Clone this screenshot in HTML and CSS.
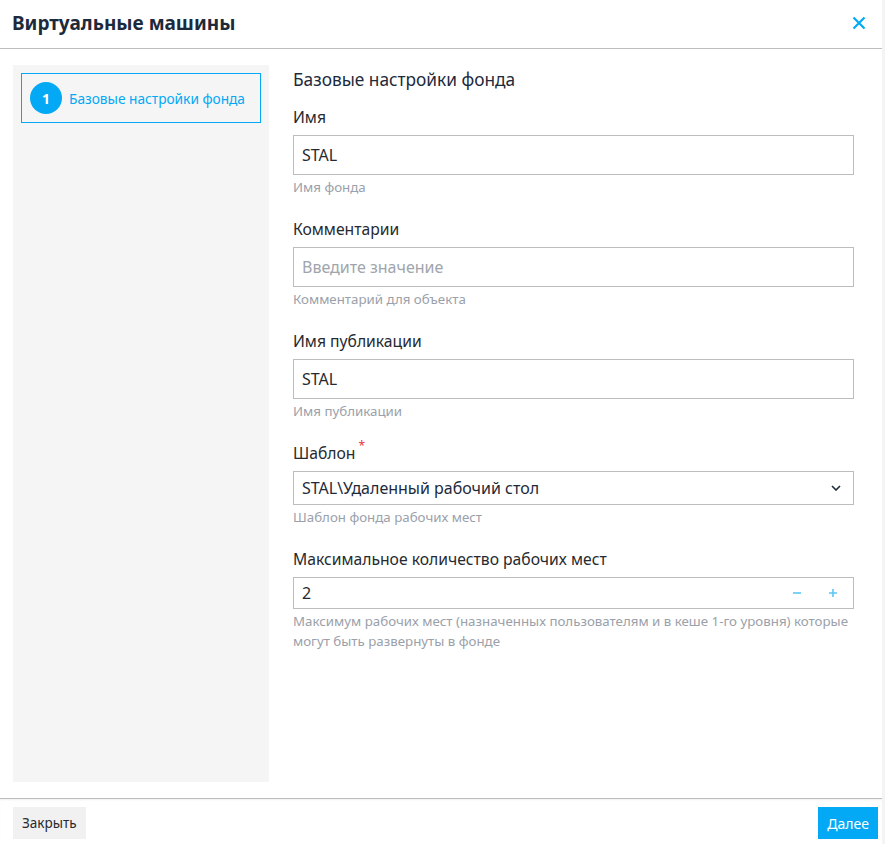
FILE: index.html
```html
<!DOCTYPE html>
<html lang="ru">
<head>
    <meta charset="UTF-8">
    <title>Виртуальные машины</title>
    <link rel="stylesheet" href="styles.css">
</head>
<body>
    <div class="dialog">
        <div class="dialog-header">
            <h1>Виртуальные машины</h1>
            <button class="close" aria-label="Закрыть">
                <svg width="14" height="14" viewBox="0 0 14 14">
                    <path d="M1.5 1.5 L12.5 12.5 M12.5 1.5 L1.5 12.5" stroke="currentColor" stroke-width="2.2" fill="none"/>
                </svg>
            </button>
        </div>

        <div class="dialog-body">
            <div class="steps">
                <div class="step active">
                    <span class="step-num">1</span>
                    <span class="step-title">Базовые настройки фонда</span>
                </div>
            </div>

            <div class="content">
                <h2>Базовые настройки фонда</h2>

                <div class="field">
                    <label>Имя</label>
                    <input type="text" value="STAL">
                    <div class="hint">Имя фонда</div>
                </div>

                <div class="field">
                    <label>Комментарии</label>
                    <input type="text" placeholder="Введите значение">
                    <div class="hint">Комментарий для объекта</div>
                </div>

                <div class="field">
                    <label>Имя публикации</label>
                    <input type="text" value="STAL">
                    <div class="hint">Имя публикации</div>
                </div>

                <div class="field">
                    <label class="required">Шаблон</label>
                    <div class="select">
                        <span>STAL\Удаленный рабочий стол</span>
                        <svg width="10" height="6" viewBox="0 0 10 6">
                            <path d="M1 1 L5 5 L9 1" stroke="currentColor" stroke-width="1.6" fill="none"/>
                        </svg>
                    </div>
                    <div class="hint">Шаблон фонда рабочих мест</div>
                </div>

                <div class="field">
                    <label>Максимальное количество рабочих мест</label>
                    <div class="number">
                        <span class="value">2</span>
                        <span class="spin">
                            <svg width="10" height="10" viewBox="0 0 10 10">
                                <path d="M1 5 H9" stroke="currentColor" stroke-width="1.6"/>
                            </svg>
                        </span>
                        <span class="spin">
                            <svg width="10" height="10" viewBox="0 0 10 10">
                                <path d="M1 5 H9 M5 1 V9" stroke="currentColor" stroke-width="1.6"/>
                            </svg>
                        </span>
                    </div>
                    <div class="hint">Максимум рабочих мест (назначенных пользователям и в кеше 1-го уровня) которые могут быть развернуты в фонде</div>
                </div>
            </div>
        </div>

        <div class="dialog-footer">
            <button class="btn">Закрыть</button>
            <button class="btn primary">Далее</button>
        </div>
    </div>
</body>
</html>
```

FILE: styles.css
```css
:root {
    --blue: #03a9f4;
    --spin: #5cc6f7;
    --title: #1d2a3b;
    --text: #262a30;
    --hint: #9aa1aa;
    --border: #bdbdbd;
    --panel: #f5f5f5;
}

* {
    box-sizing: border-box;
}

body {
    margin: 0;
    background: #f4f4f4;
    font-family: "Noto Sans", "Open Sans", sans-serif;
    color: var(--text);
}

.dialog {
    width: 882px;
    height: 844px;
    background: #fff;
    display: flex;
    flex-direction: column;
}

.dialog-header {
    height: 49px;
    padding: 0 12px 2px 12px;
    border-bottom: 1px solid var(--border);
    display: flex;
    align-items: center;
    justify-content: space-between;
}

.dialog-header h1 {
    margin: 0;
    font-size: 19px;
    font-weight: 700;
    color: var(--title);
}

.close {
    border: none;
    background: none;
    padding: 0;
    margin-right: 4px;
    color: var(--blue);
    display: flex;
}

.dialog-body {
    flex: 1;
    display: flex;
    padding: 16px 28px 16px 13px;
}

.steps {
    width: 256px;
    background: var(--panel);
    padding: 8px;
}

.step {
    height: 50px;
    display: flex;
    align-items: center;
    gap: 7px;
    padding: 0 8px;
    border: 1px solid var(--blue);
    color: var(--blue);
    font-size: 13.7px;
}

.step-num {
    width: 32px;
    height: 32px;
    border-radius: 50%;
    background: var(--blue);
    color: #fff;
    font-weight: 700;
    font-size: 14px;
    display: flex;
    align-items: center;
    justify-content: center;
}

.content {
    flex: 1;
    padding: 3px 0 0 24px;
}

.content h2 {
    margin: 0 0 15px;
    font-size: 17.3px;
    font-weight: 400;
    line-height: 24px;
    color: var(--title);
}

.field {
    margin-bottom: 22px;
}

.field label {
    display: block;
    font-size: 15.7px;
    line-height: 20px;
    margin-bottom: 8px;
    color: var(--text);
}

.field label.required::after {
    content: "*";
    color: #f0333d;
    font-size: 12px;
    line-height: 0;
    vertical-align: 9px;
    margin-left: 3px;
}

.field input {
    display: block;
    width: 100%;
    height: 40px;
    padding: 0 8px;
    border: 1px solid var(--border);
    font-family: inherit;
    font-size: 16px;
    color: var(--text);
    outline: none;
}

.field input::placeholder {
    color: #a0a5ad;
}

.hint {
    margin-top: 2px;
    font-size: 13.3px;
    line-height: 20px;
    color: var(--hint);
}

.select {
    height: 34px;
    border: 1px solid var(--border);
    padding: 0 12px 0 8px;
    display: flex;
    align-items: center;
    justify-content: space-between;
    font-size: 16px;
    color: var(--title);
}

.number {
    height: 32px;
    border: 1px solid var(--border);
    padding: 0 2px 0 8px;
    display: flex;
    align-items: center;
    font-size: 16px;
}

.number .value {
    flex: 1;
}

.number .spin {
    width: 36px;
    display: flex;
    justify-content: center;
    color: var(--spin);
}

.dialog-footer {
    height: 46px;
    border-top: 1px solid var(--border);
    box-shadow: 0 2px 3px -2px rgba(0, 0, 0, 0.12) inset;
    padding: 8px 4px 5px 13px;
    display: flex;
    justify-content: space-between;
    align-items: flex-start;
}

.btn {
    height: 32px;
    padding: 0 9px;
    border: none;
    background: #f1f1f1;
    font-family: inherit;
    font-size: 13.5px;
    color: var(--text);
}

.btn.primary {
    background: var(--blue);
    color: #fff;
    font-size: 14px;
}
```
